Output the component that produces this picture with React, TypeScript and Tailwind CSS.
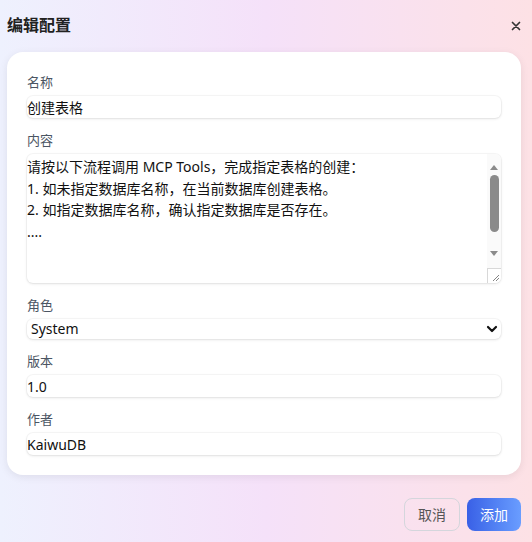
import React from "react";

const font = { fontFamily: '"Noto Sans", "Noto Sans CJK SC", sans-serif' };

function Label({ children }: { children: React.ReactNode }) {
  return <div className="text-[13px] leading-5 text-[#4b5563] mb-1">{children}</div>;
}

const inputCls =
  "block w-full h-[22px] px-0 text-[14px] text-[#111] bg-white rounded-md outline-none shadow-[0_0_0_1px_rgba(0,0,0,0.03),0_1px_3px_rgba(0,0,0,0.1)]";

export default function App() {
  const content =
    "请按以下流程调用 MCP Tools，完成指定表格的创建：\n1. 如未指定数据库名称，在当前数据库创建表格。\n2. 如指定数据库名称，确认指定数据库是否存在。\n....";
  return (
    <div
      style={font}
      className="w-full h-[542px] bg-gradient-to-r from-[#eef1fe] via-[#f5e1f9] to-[#fde1e5] px-2 pt-[15px]"
    >
      <div className="flex items-center justify-between h-5">
        <div className="text-[16px] font-bold text-[#222] leading-5 -ml-px">编辑配置</div>
        <svg width="10" height="10" viewBox="0 0 10 10" className="mr-[3px] mt-[2px]">
          <path d="M1.5 1.5 L8.5 8.5 M8.5 1.5 L1.5 8.5" stroke="#333" strokeWidth="1.7" strokeLinecap="round" />
        </svg>
      </div>
      <div className="mt-[17px] -ml-px mr-[3px] bg-white rounded-2xl shadow-[0_2px_8px_rgba(0,0,0,0.08)] px-5 pt-5 pb-5">
        <Label>名称</Label>
        <input className={inputCls} defaultValue="创建表格" />
        <div className="mt-3">
          <Label>内容</Label>
          <div className="relative h-[129px] rounded-md bg-white shadow-[0_0_0_1px_rgba(0,0,0,0.03),0_1px_3px_rgba(0,0,0,0.1)] overflow-hidden">
            <textarea
              className="block w-full h-full p-0 pt-[2px] pr-4 text-[14px] leading-[21.5px] text-[#111] bg-transparent outline-none resize-none overflow-hidden"
              defaultValue={content}
            />
            <div className="absolute right-0 top-0 bottom-0 w-[14px] bg-[#fafafa] flex flex-col items-center pointer-events-none">
              <svg width="8" height="5" viewBox="0 0 8 5" className="mt-[11px]">
                <path d="M0 5 L4 0 L8 5 Z" fill="#8a8a8a" />
              </svg>
              <div className="mt-[5px] w-[9px] h-[57px] rounded-full bg-[#8a8a8a]" />
              <svg width="8" height="5" viewBox="0 0 8 5" className="mt-[19px]">
                <path d="M0 0 L8 0 L4 5 Z" fill="#8a8a8a" />
              </svg>
              <div className="mt-auto w-[14px] h-[15px] border-l border-t border-[#d8d8d8] bg-white relative">
                <svg width="14" height="15" viewBox="0 0 14 15" className="absolute -left-px -top-px">
                  <path d="M6 13 L12 7 M9 13 L12 10" stroke="#777" strokeWidth="0.9" />
                </svg>
              </div>
            </div>
          </div>
        </div>
        <div className="mt-3">
          <Label>角色</Label>
          <div className="relative">
            <select className="block w-full h-5 appearance-none pl-1 text-[14px] leading-5 text-[#111] bg-white rounded-md outline-none shadow-[0_0_0_1px_rgba(0,0,0,0.03),0_1px_3px_rgba(0,0,0,0.1)]">
              <option>System</option>
              <option>User</option>
              <option>Assistant</option>
            </select>
            <svg
              width="12"
              height="8"
              viewBox="0 0 12 8"
              className="absolute right-[3px] top-[6px] pointer-events-none"
            >
              <path d="M2 2 L6 6 L10 2" stroke="#111" strokeWidth="2.2" fill="none" strokeLinecap="round" strokeLinejoin="round" />
            </svg>
          </div>
        </div>
        <div className="mt-3">
          <Label>版本</Label>
          <input className={inputCls} defaultValue="1.0" />
        </div>
        <div className="mt-3">
          <Label>作者</Label>
          <input className={inputCls} defaultValue="KaiwuDB" />
        </div>
      </div>
      <div className="flex justify-end gap-[7px] mt-[23px] mr-[3px]">
        <button className="w-14 h-[33px] rounded-lg border border-[#d4d6dc] text-[14px] text-[#555] bg-transparent">
          取消
        </button>
        <button className="w-[54px] h-[33px] rounded-lg bg-gradient-to-r from-[#3a60e6] to-[#6a9dff] text-[14px] text-white">
          添加
        </button>
      </div>
    </div>
  );
}
